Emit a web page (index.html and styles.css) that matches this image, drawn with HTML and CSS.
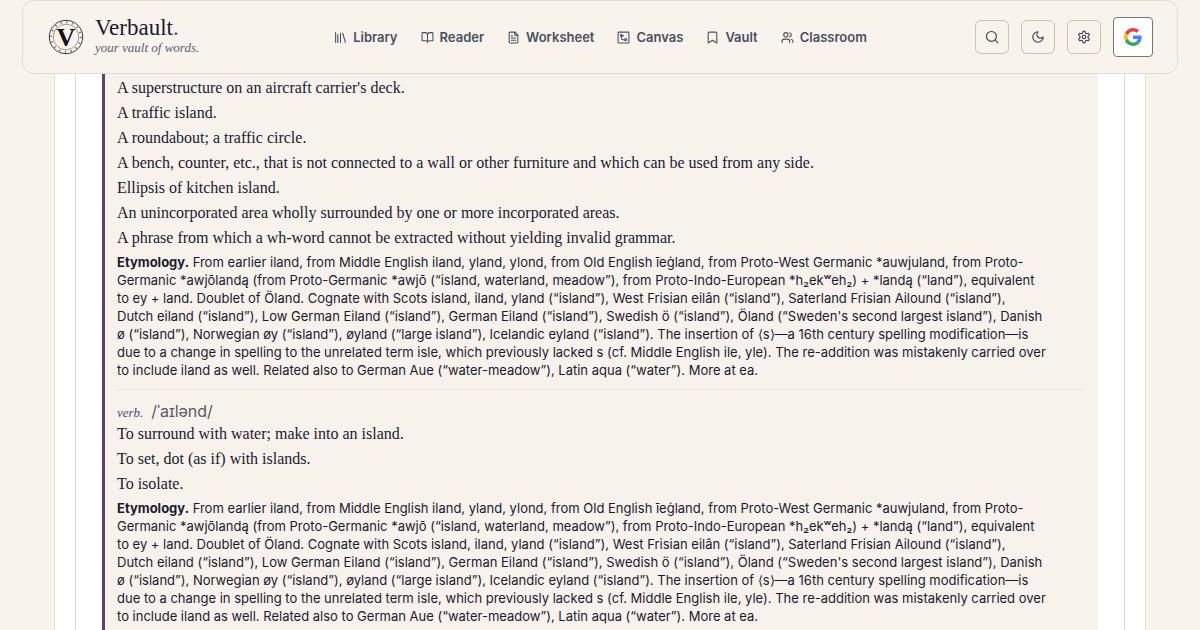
FILE: index.html
```html
<!DOCTYPE html>
<html lang="en">
<head>
<meta charset="utf-8">
<meta name="viewport" content="width=device-width, initial-scale=1">
<title>Verbault</title>
<link rel="stylesheet" href="styles.css">
</head>
<body>
<header class="topbar">
  <a class="brand" href="#">
    <svg class="brand-mark" viewBox="0 0 36 36" aria-hidden="true">
      <circle cx="18" cy="18" r="16.7" fill="none" stroke="#3c3c3a" stroke-width="1"/>
      <circle cx="18" cy="18" r="14.8" fill="none" stroke="#55534f" stroke-width="2" stroke-dasharray="1 4.81"/>
      <circle cx="18" cy="18" r="12.8" fill="none" stroke="#85827c" stroke-width=".8"/>
      <text class="brand-letter" x="18" y="27" text-anchor="middle">V</text>
    </svg>
    <span class="brand-text">
      <span class="brand-name">Verbault<span class="brand-dot">.</span></span>
      <span class="brand-tag">your vault of words.</span>
    </span>
  </a>
  <nav class="nav" aria-label="Main">
    <a class="nav-link" href="#"><svg class="icon" viewBox="0 0 24 24"><path d="m16 4 5 17M12 4v17M7 7v14M3 3v18"/></svg>Library</a>
    <a class="nav-link" href="#"><svg class="icon" viewBox="0 0 24 24"><path d="M12 7v14M3 18a1 1 0 0 1-1-1V4a1 1 0 0 1 1-1h5a4 4 0 0 1 4 4 4 4 0 0 1 4-4h5a1 1 0 0 1 1 1v13a1 1 0 0 1-1 1h-6a3 3 0 0 0-3 3 3 3 0 0 0-3-3z"/></svg>Reader</a>
    <a class="nav-link" href="#"><svg class="icon" viewBox="0 0 24 24"><path d="M15 2H6a2 2 0 0 0-2 2v16a2 2 0 0 0 2 2h12a2 2 0 0 0 2-2V7ZM14 2v4a2 2 0 0 0 2 2h4M10 9H8M16 13H8M16 17H8"/></svg>Worksheet</a>
    <a class="nav-link" href="#"><svg class="icon" viewBox="0 0 24 24"><rect x="2" y="2" width="20" height="20" rx="1"/><path d="M8 8v5a3 3 0 0 0 3 3h3M8 9h4"/><circle cx="8" cy="8" r="1.5"/><circle cx="16" cy="16" r="2"/></svg>Canvas</a>
    <a class="nav-link" href="#"><svg class="icon" viewBox="0 0 24 24"><path d="m20 22-8-5-8 5V4a2 2 0 0 1 2-2h12a2 2 0 0 1 2 2z"/></svg>Vault</a>
    <a class="nav-link" href="#"><svg class="icon" viewBox="0 0 24 24"><path d="M16 21v-2a4 4 0 0 0-4-4H6a4 4 0 0 0-4 4v2M22 21v-2a4 4 0 0 0-3-3.870M16 3.130a4 4 0 0 1 0 7.750"/><circle cx="9" cy="7" r="4"/></svg>Classroom</a>
  </nav>
  <div class="tools">
    <button class="tool" type="button" aria-label="Search"><svg class="icon tool-icon" viewBox="0 0 24 24"><circle cx="11" cy="11" r="8.500"/><path d="m22 22-4.500-4.500"/></svg></button>
    <button class="tool" type="button" aria-label="Dark mode"><svg class="icon tool-icon" viewBox="0 0 24 24"><path d="M12 3a6 6 0 0 0 9 9 9 9 0 1 1-9-9Z"/></svg></button>
    <button class="tool" type="button" aria-label="Settings"><svg class="icon tool-icon" viewBox="0 0 24 24"><path d="M12.220 2h-.44a2 2 0 0 0-2 2v.18a2 2 0 0 1-1 1.730l-.43.25a2 2 0 0 1-2 0l-.15-.08a2 2 0 0 0-2.730.73l-.22.38a2 2 0 0 0 .73 2.730l.15.1a2 2 0 0 1 1 1.720v.51a2 2 0 0 1-1 1.740l-.15.09a2 2 0 0 0-.73 2.730l.22.38a2 2 0 0 0 2.730.73l.15-.08a2 2 0 0 1 2 0l.43.25a2 2 0 0 1 1 1.730V20a2 2 0 0 0 2 2h.44a2 2 0 0 0 2-2v-.18a2 2 0 0 1 1-1.730l.43-.25a2 2 0 0 1 2 0l.15.08a2 2 0 0 0 2.730-.73l.22-.39a2 2 0 0 0-.73-2.730l-.15-.08a2 2 0 0 1-1-1.740v-.5a2 2 0 0 1 1-1.740l.15-.09a2 2 0 0 0 .73-2.730l-.22-.38a2 2 0 0 0-2.730-.73l-.15.08a2 2 0 0 1-2 0l-.43-.25a2 2 0 0 1-1-1.730V4a2 2 0 0 0-2-2z"/><circle cx="12" cy="12" r="3"/></svg></button>
    <button class="tool tool-google" type="button" aria-label="Sign in with Google"><svg class="google" viewBox="0 0 48 48"><path fill="#EA4335" d="M24 9.500c3.540 0 6.710 1.220 9.210 3.600l6.850-6.850C35.900 2.380 30.470 0 24 0 14.620 0 6.510 5.380 2.560 13.220l7.980 6.190C12.430 13.720 17.740 9.500 24 9.500z"/><path fill="#4285F4" d="M46.980 24.550c0-1.570-.15-3.090-.38-4.550H24v9.020h12.940c-.58 2.960-2.260 5.480-4.780 7.180l7.730 6c4.510-4.180 7.090-10.360 7.090-17.650z"/><path fill="#FBBC05" d="M10.530 28.590c-.48-1.450-.76-2.990-.76-4.590s.27-3.140.76-4.590l-7.980-6.190C.92 16.460 0 20.120 0 24c0 3.880.92 7.540 2.560 10.780l7.970-6.190z"/><path fill="#34A853" d="M24 48c6.480 0 11.930-2.130 15.890-5.810l-7.730-6c-2.150 1.450-4.920 2.300-8.160 2.300-6.260 0-11.570-4.220-13.470-9.910l-7.980 6.190C6.510 42.620 14.620 48 24 48z"/></svg></button>
  </div>
</header>
<main class="page">
  <div class="column">
    <article class="entry">
      <section class="sense">
        <ul class="defs">
          <li>A superstructure on an aircraft carrier's deck.</li>
          <li>A traffic island.</li>
          <li>A roundabout; a traffic circle.</li>
          <li>A bench, counter, etc., that is not connected to a wall or other furniture and which can be used from any side.</li>
          <li>Ellipsis of kitchen island.</li>
          <li>An unincorporated area wholly surrounded by one or more incorporated areas.</li>
          <li>A phrase from which a wh-word cannot be extracted without yielding invalid grammar.</li>
        </ul>
        <p class="etymology"><strong>Etymology.</strong> From earlier iland, from Middle English iland, yland, ylond, from Old English īeġland, from Proto-West Germanic *auwjuland, from Proto-<br>Germanic *awjōlandą (from Proto-Germanic *awjō (“island, waterland, meadow”), from Proto-Indo-European *h₂ekʷeh₂) + *landą (“land”), equivalent<br>to ey + land. Doublet of Öland. Cognate with Scots island, iland, yland (“island”), West Frisian eilân (“island”), Saterland Frisian Ailound (“island”),<br>Dutch eiland (“island”), Low German Eiland (“island”), German Eiland (“island”), Swedish ö (“island”), Öland (“Sweden's second largest island”), Danish<br>ø (“island”), Norwegian øy (“island”), øyland (“large island”), Icelandic eyland (“island”). The insertion of ⟨s⟩—a 16th century spelling modification—is<br>due to a change in spelling to the unrelated term isle, which previously lacked s (cf. Middle English ile, yle). The re-addition was mistakenly carried over<br>to include iland as well. Related also to German Aue (“water-meadow”), Latin aqua (“water”). More at ea.</p>
      </section>
      <section class="sense">
        <p class="head"><em class="pos">verb.</em><span class="ipa">/ˈaɪlənd/</span></p>
        <ul class="defs">
          <li>To surround with water; make into an island.</li>
          <li>To set, dot (as if) with islands.</li>
          <li>To isolate.</li>
        </ul>
        <p class="etymology"><strong>Etymology.</strong> From earlier iland, from Middle English iland, yland, ylond, from Old English īeġland, from Proto-West Germanic *auwjuland, from Proto-<br>Germanic *awjōlandą (from Proto-Germanic *awjō (“island, waterland, meadow”), from Proto-Indo-European *h₂ekʷeh₂) + *landą (“land”), equivalent<br>to ey + land. Doublet of Öland. Cognate with Scots island, iland, yland (“island”), West Frisian eilân (“island”), Saterland Frisian Ailound (“island”),<br>Dutch eiland (“island”), Low German Eiland (“island”), German Eiland (“island”), Swedish ö (“island”), Öland (“Sweden's second largest island”), Danish<br>ø (“island”), Norwegian øy (“island”), øyland (“large island”), Icelandic eyland (“island”). The insertion of ⟨s⟩—a 16th century spelling modification—is<br>due to a change in spelling to the unrelated term isle, which previously lacked s (cf. Middle English ile, yle). The re-addition was mistakenly carried over<br>to include iland as well. Related also to German Aue (“water-meadow”), Latin aqua (“water”). More at ea.</p>
      </section>
    </article>
  </div>
</main>
</body>
</html>
```

FILE: styles.css
```css
* { box-sizing: border-box; }
body {
  margin: 0;
  background: #f8f3ec;
  color: #1a1a2e;
  font-family: Inter, "Liberation Sans", sans-serif;
}
.topbar {
  display: grid;
  grid-template-columns: 1fr auto 1fr;
  align-items: center;
  margin: 0 22px;
  padding: 16px 24px 16px 25px;
  background: #f8f3ec;
  border: 1px solid #e3dccf;
  border-radius: 12px;
}
.brand {
  display: flex;
  align-items: center;
  gap: 11px;
  color: inherit;
  text-decoration: none;
}
.brand-mark { width: 36px; height: 36px; }
.brand-letter {
  font: bold 26px "Liberation Serif", serif;
  fill: #11110f;
}
.brand-text {
  display: flex;
  flex-direction: column;
  font-family: "Liberation Serif", serif;
}
.brand-name { font-size: 23px; line-height: 22px; }
.brand-dot { color: #5b4076; }
.brand-tag {
  color: #5a6070;
  font-size: 13px;
  font-style: italic;
  line-height: 18px;
}
.nav { display: flex; gap: 23px; }
.nav-link {
  display: flex;
  align-items: center;
  gap: 6px;
  color: #4a5060;
  font-size: 13px;
  font-weight: 600;
  text-decoration: none;
}
.icon {
  width: 13px;
  height: 13px;
  fill: none;
  stroke: currentColor;
  stroke-width: 2;
  stroke-linecap: round;
  stroke-linejoin: round;
}
.tools {
  display: flex;
  justify-content: flex-end;
  align-items: center;
  gap: 12px;
}
.tool {
  display: flex;
  align-items: center;
  justify-content: center;
  width: 34px;
  height: 34px;
  padding: 0;
  color: #3f4354;
  background: transparent;
  border: 1px solid #cbc4b0;
  border-radius: 6px;
}
.tool-icon { width: 14px; height: 14px; }
.tool-google {
  width: 40px;
  height: 40px;
  background: #fff;
  border-color: #747775;
  border-radius: 4px;
}
.google { width: 18px; height: 18px; }
.page {
  margin: 0 54px;
  padding: 0 20px;
  background: #fff;
  border: 1px solid #e3dccf;
  border-width: 0 1px;
}
.column {
  padding: 0 26px;
  border: 1px solid #e3dccf;
  border-width: 0 1px;
}
.entry {
  padding: 1px 13px 24px 12px;
  background: #f7f2ec;
  border-left: 3px solid #5b4076;
}
.sense + .sense {
  margin-top: 10px;
  padding-top: 12px;
  border-top: 1px solid #ebe6e0;
}
.defs {
  margin: 0;
  padding: 0;
  list-style: none;
  font: 16px/25px "Liberation Serif", serif;
}
.head {
  display: flex;
  align-items: baseline;
  gap: 8px;
  margin: 0;
  line-height: 19px;
}
.pos {
  color: #5b4076;
  font: italic 13px "Liberation Serif", serif;
}
.ipa { color: #5a5a64; font-size: 16px; }
.etymology {
  margin: 0;
  padding-top: 3px;
  font-size: 13px;
  line-height: 18px;
}
```
